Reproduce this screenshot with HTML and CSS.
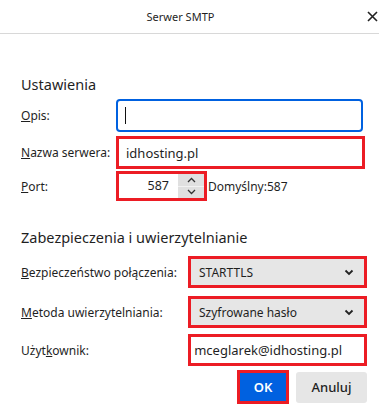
FILE: index.html
```html
<!DOCTYPE html>
<html lang="pl">
<head>
  <meta charset="UTF-8" />
  <title>Serwer SMTP</title>
  <link rel="stylesheet" href="styles.css">
</head>
<body>
  <div class="titlebar">
    <span class="title">Serwer SMTP</span>
    <svg class="close" width="11" height="11" viewBox="0 0 11 11">
      <path d="M1 1 L10 10 M10 1 L1 10" stroke="#222" stroke-width="1.6" fill="none"/>
    </svg>
  </div>

  <div class="content">
    <h2 class="section_title first">Ustawienia</h2>

    <div class="row row_opis">
      <label class="label_a"><u>O</u>pis:</label>
      <div class="input focused"><span class="caret"></span></div>
    </div>

    <div class="row row_name">
      <label class="label_a"><u>N</u>azwa serwera:</label>
      <div class="input marked wide">idhosting.pl</div>
    </div>

    <div class="row row_port">
      <label class="label_a"><u>P</u>ort:</label>
      <div class="port marked">
        <span class="port_value">587</span>
        <span class="spinner">
          <span class="spin_btn">
            <svg width="9" height="6" viewBox="0 0 9 6"><path d="M1 5 L4.5 1.5 L8 5" stroke="#333" stroke-width="1.3" fill="none"/></svg>
          </span>
          <span class="spin_btn">
            <svg width="9" height="6" viewBox="0 0 9 6"><path d="M1 1 L4.5 4.5 L8 1" stroke="#333" stroke-width="1.3" fill="none"/></svg>
          </span>
        </span>
      </div>
      <span class="default_port">Domyślny:587</span>
    </div>

    <h2 class="section_title second">Zabezpieczenia i uwierzytelnianie</h2>

    <div class="row row_sel1">
      <label class="label_b"><u>B</u>ezpieczeństwo połączenia:</label>
      <div class="select marked">
        <span>STARTTLS</span>
        <svg width="10" height="7" viewBox="0 0 10 7"><path d="M1.5 1.5 L5 5 L8.5 1.5" stroke="#222" stroke-width="1.8" fill="none"/></svg>
      </div>
    </div>

    <div class="row row_sel2">
      <label class="label_b"><u>M</u>etoda uwierzytelniania:</label>
      <div class="select marked">
        <span>Szyfrowane hasło</span>
        <svg width="10" height="7" viewBox="0 0 10 7"><path d="M1.5 1.5 L5 5 L8.5 1.5" stroke="#222" stroke-width="1.8" fill="none"/></svg>
      </div>
    </div>

    <div class="row row_user">
      <label class="label_b">Użyt<u>k</u>ownik:</label>
      <div class="input marked user"><span class="user_text">mceglarek@idhosting.pl</span></div>
    </div>

    <div class="buttons">
      <div class="ok_frame"><button class="btn ok">OK</button></div>
      <button class="btn cancel">Anuluj</button>
    </div>
  </div>
</body>
</html>
```

FILE: styles.css
```css
body {
  margin: 0;
  background-color: #fff;
  font-family: "Noto Sans", "Open Sans", sans-serif;
  color: #1f1f1f;
  font-size: 12px;
  width: 379px;
  height: 415px;
  overflow: hidden;
}

.titlebar {
  height: 33px;
  border-bottom: 1px solid #d8d8d8;
  display: flex;
  align-items: center;
  justify-content: center;
  position: relative;
  padding-right: 18px;
}

.title {
  font-size: 11px;
}

.close {
  position: absolute;
  right: 1px;
  top: 11px;
}

.content {
  padding-left: 21px;
}

.section_title {
  font-size: 14.5px;
  font-weight: normal;
  margin: 0;
  line-height: 22px;
  white-space: nowrap;
}

.first {
  margin-top: 39px;
  margin-bottom: 4px;
}

.second {
  margin-top: 25px;
  margin-bottom: 8px;
}

.row {
  display: flex;
  align-items: center;
}

label {
  white-space: nowrap;
}

.label_a {
  width: 95px;
}

.label_b {
  width: 167px;
}

.row_opis {
  height: 33px;
}

.row_name {
  margin-top: 4px;
  height: 33px;
}

.row_port {
  margin-top: 2px;
  height: 30px;
}

.row_sel1 {
  height: 32px;
}

.row_sel2 {
  margin-top: 8px;
  height: 32px;
}

.row_user {
  margin-top: 6px;
  height: 32px;
}

.input {
  box-sizing: border-box;
  height: 33px;
  display: flex;
  align-items: center;
  padding-left: 7px;
  background: #fff;
  font-size: 13px;
}

.focused {
  width: 247px;
  border: 2px solid #0061e0;
  border-radius: 4px;
}

.caret {
  width: 1px;
  height: 17px;
  background: #111;
}

.marked {
  border: 3px solid #ec1c24;
}

.wide {
  width: 249px;
}

.port {
  box-sizing: border-box;
  width: 91px;
  height: 30px;
  display: flex;
  font-size: 12.5px;
}

.port_value {
  flex: 1;
  text-align: right;
  padding-right: 9px;
  line-height: 24px;
}

.spinner {
  width: 26px;
  background: #e0e0e0;
  display: flex;
  flex-direction: column;
}

.spin_btn {
  flex: 1;
  display: flex;
  align-items: center;
  justify-content: center;
}

.spin_btn + .spin_btn {
  border-top: 1px solid #f2f2f2;
}

.default_port {
  margin-left: 1px;
  white-space: nowrap;
}

.select {
  box-sizing: border-box;
  width: 179px;
  height: 32px;
  background: #e6e6e6;
  display: flex;
  align-items: center;
  justify-content: space-between;
  padding: 0 10px 0 8px;
}

.user {
  width: 179px;
  height: 32px;
  justify-content: flex-end;
  padding: 0 22px 0 4px;
  overflow: hidden;
  white-space: nowrap;
}

.user_text {
  flex-shrink: 0;
}

.buttons {
  display: flex;
  justify-content: flex-end;
  align-items: center;
  gap: 7px;
  padding-right: 12px;
  margin-top: 4px;
}

.ok_frame {
  border: 3px solid #ec1c24;
  display: flex;
}

.btn {
  font-family: inherit;
  font-size: 13px;
  border: none;
  border-radius: 3px;
  height: 28px;
  padding: 0;
}

.ok {
  width: 46px;
  background: #0061e0;
  color: #fff;
  font-weight: 600;
  border-radius: 0;
}

.cancel {
  width: 71px;
  height: 31px;
  background: #e6e6e6;
  color: #1f1f1f;
  font-weight: 500;
}
```
